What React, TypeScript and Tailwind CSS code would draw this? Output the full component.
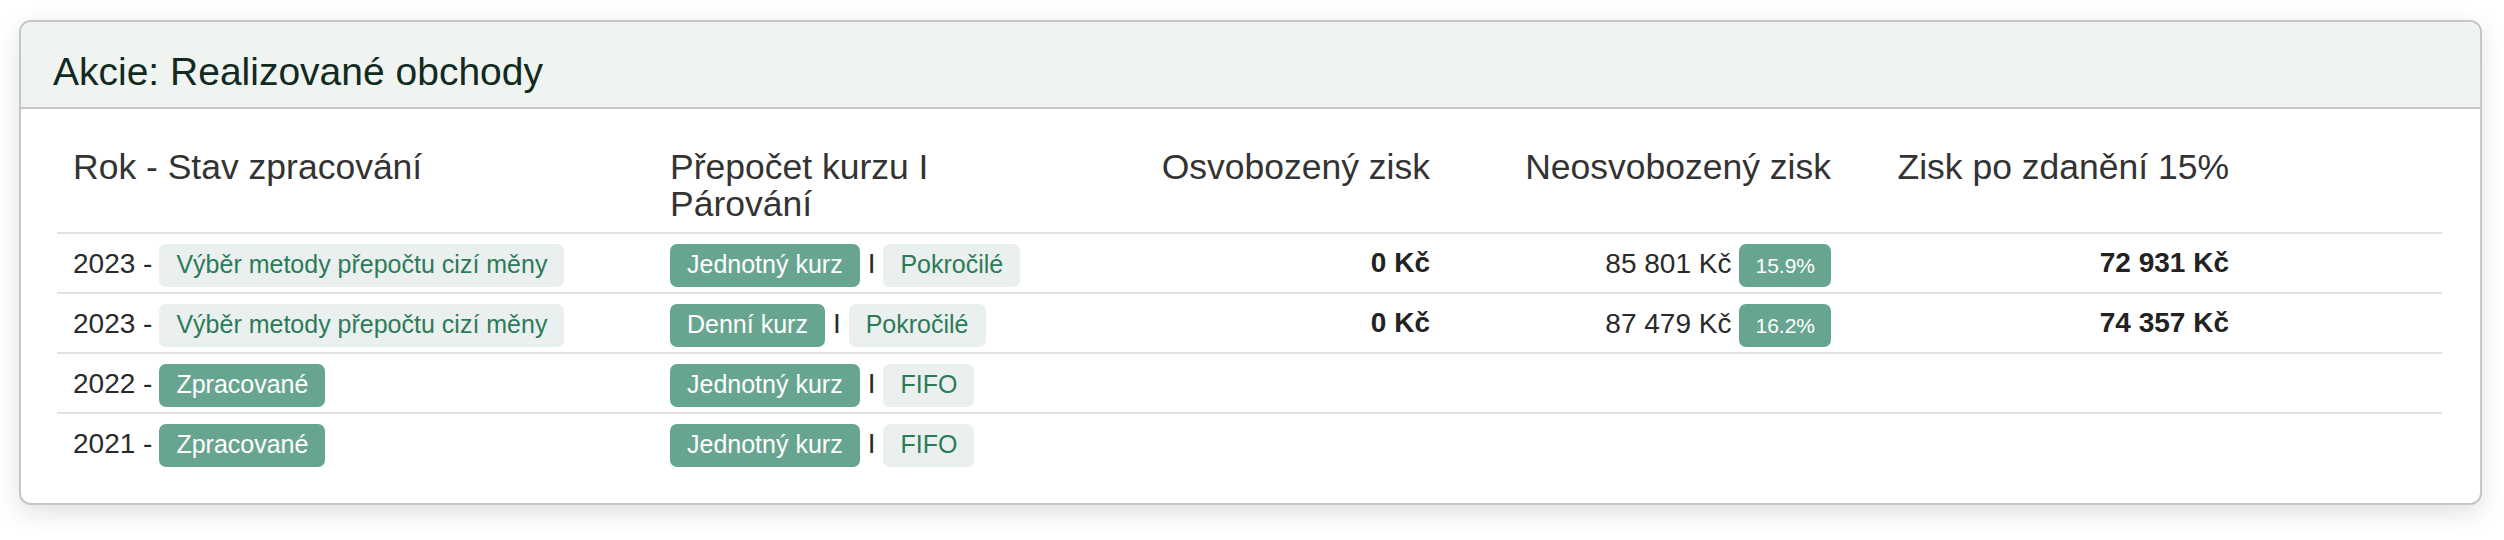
import React from "react";

type Row = {
  year: string;
  state: string;
  done: boolean;
  rate: string;
  pairing: string;
  exempt?: string;
  taxable?: string;
  share?: string;
  net?: string;
};

const rows: Row[] = [
  { year: "2023", state: "Výběr metody přepočtu cizí měny", done: false, rate: "Jednotný kurz", pairing: "Pokročilé", exempt: "0 Kč", taxable: "85 801 Kč", share: "15.9%", net: "72 931 Kč" },
  { year: "2023", state: "Výběr metody přepočtu cizí měny", done: false, rate: "Denní kurz", pairing: "Pokročilé", exempt: "0 Kč", taxable: "87 479 Kč", share: "16.2%", net: "74 357 Kč" },
  { year: "2022", state: "Zpracované", done: true, rate: "Jednotný kurz", pairing: "FIFO" },
  { year: "2021", state: "Zpracované", done: true, rate: "Jednotný kurz", pairing: "FIFO" },
];

const cols = "grid grid-cols-[597px_420px_372px_401px_398px_1fr]";

function Badge({ solid, children }: { solid?: boolean; children: React.ReactNode }) {
  return (
    <span
      className={
        "h-[43px] px-[17px] rounded-[7px] text-[25px] leading-[40px] whitespace-nowrap " +
        (solid ? "bg-[#68a590] text-white" : "bg-[#eaf0ef] text-[#2e7a57]")
      }
    >
      {children}
    </span>
  );
}

export default function App() {
  return (
    <div className="bg-white min-h-[540px] pt-[20px] pl-[19px] pr-[22px] font-['Liberation_Sans',Arial,sans-serif]">
      <div className="bg-white border-2 border-[#c6c6c6] rounded-[12px] overflow-hidden shadow-[0_8px_24px_rgba(0,0,0,0.12)]">
        <div className="bg-[#eff4f1] border-b-2 border-[#c6c6c6] px-[32px] pt-[26px] pb-[11px]">
          <h5 className="text-[39px] leading-[48px] text-[#122a1f]">Akcie: Realizované obchody</h5>
        </div>

        <div className="pl-[36px] pr-[38px] pt-[32px] pb-[31px]">
          <div className={cols + " text-[35.5px] leading-[37px] text-[#333] pt-[8px] pb-[9px]"}>
            <div className="px-[16px]">Rok - Stav zpracování</div>
            <div className="px-[16px]">Přepočet kurzu I Párování</div>
            <div className="px-[16px] text-right">Osvobozený zisk</div>
            <div className="px-[16px] text-right">Neosvobozený zisk</div>
            <div className="px-[16px] text-right">Zisk po zdanění 15%</div>
            <div />
          </div>

          {rows.map((r, i) => (
            <div key={i} className={cols + " border-t-2 border-[#dee2e6] pt-[10px] pb-[5px] text-[28px] leading-[38px] text-[#2a2a2a]"}>
              <div className="flex items-baseline gap-[7px] px-[16px]">
                <span>{r.year} -</span>
                <Badge solid={r.done}>{r.state}</Badge>
              </div>
              <div className="flex items-baseline gap-[8px] px-[16px]">
                <Badge solid>{r.rate}</Badge>
                <span>I</span>
                <Badge>{r.pairing}</Badge>
              </div>
              <div className="flex justify-end px-[16px] font-bold text-[#222]">{r.exempt}</div>
              <div className="flex items-baseline justify-end gap-[8px] px-[16px]">
                {r.taxable && <span>{r.taxable}</span>}
                {r.share && (
                  <span className="h-[43px] px-[16px] rounded-[7px] bg-[#68a590] text-white text-[21px] leading-[43px]">
                    {r.share}
                  </span>
                )}
              </div>
              <div className="flex justify-end px-[16px] font-bold text-[#222]">{r.net}</div>
              <div />
            </div>
          ))}
        </div>
      </div>
    </div>
  );
}
